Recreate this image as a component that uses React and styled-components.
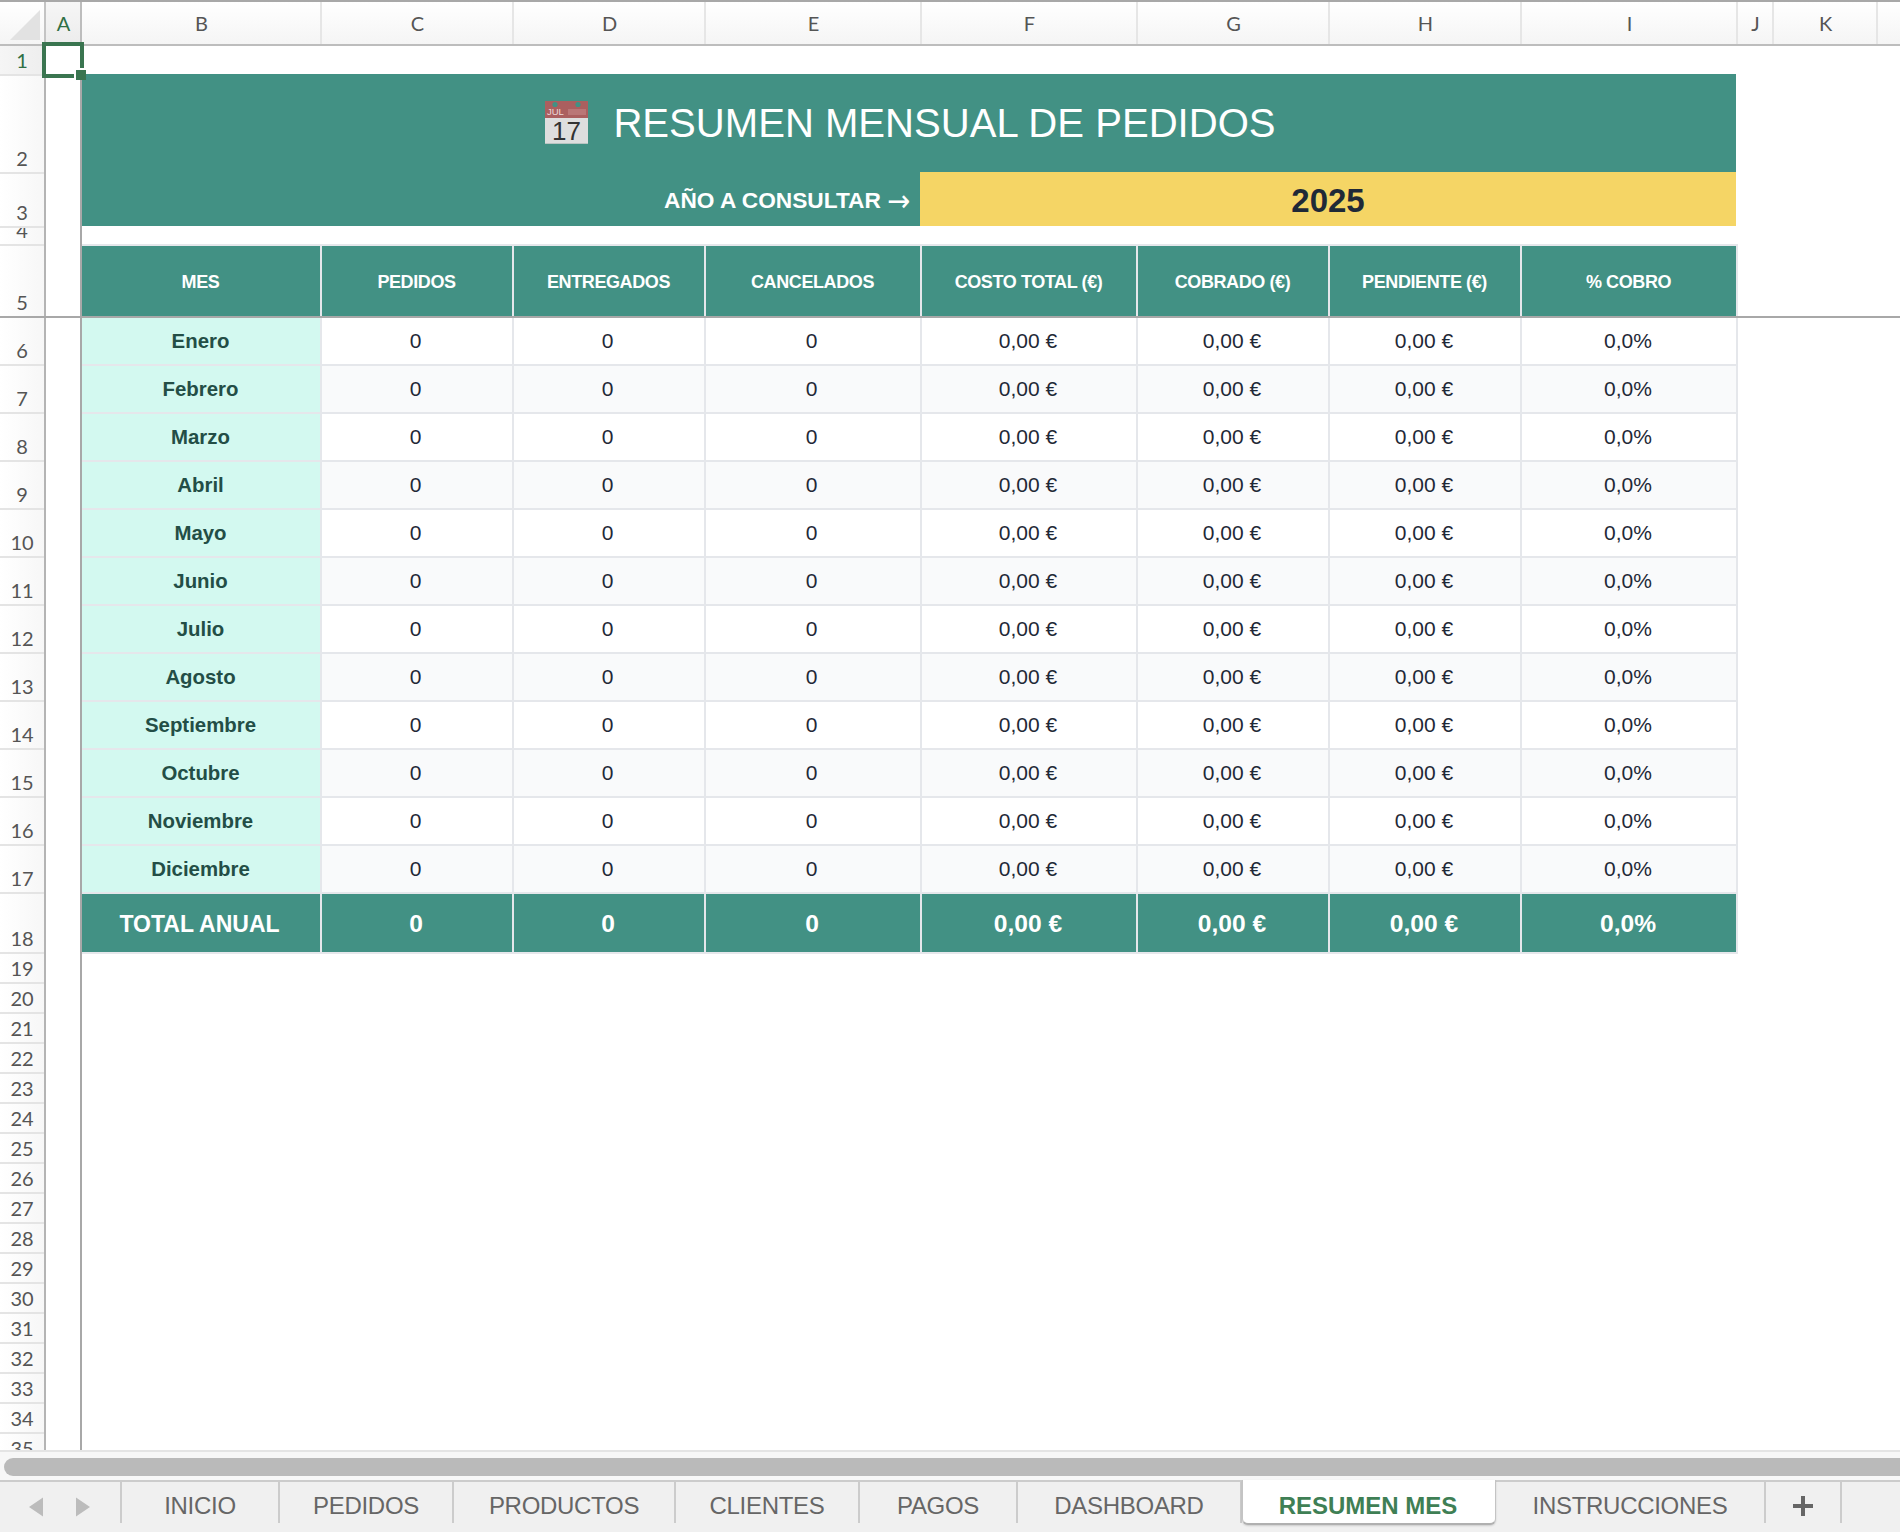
import React from "react";
import styled, { createGlobalStyle } from "styled-components";

const TEAL = "#429184";
const CELL_LINE = "#e5e7eb";
const SHEET_FONT = '"Liberation Sans", Arial, sans-serif';
const HEADER_FONT = 'Lato, "Open Sans", sans-serif';

const GlobalStyle = createGlobalStyle`
  html, body {
    margin: 0;
    padding: 0;
    background: #fff;
  }
  * {
    box-sizing: border-box;
  }
`;

const COLUMNS = [
  { label: "B", width: 240 },
  { label: "C", width: 192 },
  { label: "D", width: 192 },
  { label: "E", width: 216 },
  { label: "F", width: 216 },
  { label: "G", width: 192 },
  { label: "H", width: 192 },
  { label: "I", width: 216 },
  { label: "J", width: 36 },
  { label: "K", width: 104 },
];

const rowHeight = (n) => {
  if (n === 1) return 30;
  if (n === 2) return 98;
  if (n === 3) return 54;
  if (n === 4) return 18;
  if (n === 5) return 72;
  if (n <= 17) return 48;
  if (n === 18) return 60;
  return 30;
};
const ROWS = Array.from({ length: 35 }, (_, i) => i + 1);

const HEADERS = ["MES", "PEDIDOS", "ENTREGADOS", "CANCELADOS", "COSTO TOTAL (€)", "COBRADO (€)", "PENDIENTE (€)", "% COBRO"];
const MONTHS = ["Enero", "Febrero", "Marzo", "Abril", "Mayo", "Junio", "Julio", "Agosto", "Septiembre", "Octubre", "Noviembre", "Diciembre"];

const TABS = [
  { name: "INICIO", width: 158 },
  { name: "PEDIDOS", width: 174 },
  { name: "PRODUCTOS", width: 222 },
  { name: "CLIENTES", width: 184 },
  { name: "PAGOS", width: 158 },
  { name: "DASHBOARD", width: 224 },
  { name: "RESUMEN MES", width: 254, active: true },
  { name: "INSTRUCCIONES", width: 270 },
];

const CalendarIcon = () => (
  <svg width="43" height="43" viewBox="0 0 43 43" overflow="visible">
    <rect width="43" height="43" fill="#b9c4c2" />
    <rect width="43" height="42" fill="#dedede" />
    <rect width="43" height="17" fill="#ab5f5f" />
    <circle cx="10" cy="3.5" r="2.6" fill={TEAL} />
    <circle cx="33" cy="3.5" r="2.6" fill={TEAL} />
    <text x="2" y="14" fontFamily={SHEET_FONT} fontSize="9.5" fill="#ecd9d9">JUL</text>
    <path d="M24 8v6M26 8v6M28 8v6M30 8v6M32 8v6M34 8v6M36 8v6M38 8v6M40 8v6" stroke="#c98e8e" strokeWidth="1" />
    <text x="21.5" y="39" textAnchor="middle" fontFamily={SHEET_FONT} fontSize="26" fill="#333">17</text>
  </svg>
);

export default function App() {
  return (
    <>
      <GlobalStyle />
      <Page>
        <ColumnBar>
          <Corner>
            <svg width="30" height="30" viewBox="0 0 30 30">
              <path d="M30 0V30H0Z" fill="#e2e2e2" />
            </svg>
          </Corner>
          <ColumnLabel $width={36} $selected>A</ColumnLabel>
          {COLUMNS.map((c) => (
            <ColumnLabel key={c.label} $width={c.width}>{c.label}</ColumnLabel>
          ))}
          <ColumnFiller />
        </ColumnBar>

        <Body>
          <RowBar>
            {ROWS.map((n) => (
              <RowLabel key={n} $height={rowHeight(n)} $selected={n === 1}>{n}</RowLabel>
            ))}
          </RowBar>
          <FrozenColumn />
          <Content>
            <Banner>
              <TitleRow>
                <CalendarIcon />
                <Title>RESUMEN MENSUAL DE PEDIDOS</Title>
              </TitleRow>
              <YearRow>
                <YearLabel>
                  AÑO A CONSULTAR <YearArrow>→</YearArrow>
                </YearLabel>
                <YearValue>2025</YearValue>
              </YearRow>
            </Banner>
            <Table>
              {HEADERS.map((h) => (
                <HeadCell key={h}>{h}</HeadCell>
              ))}
              {MONTHS.map((m, i) => (
                <React.Fragment key={m}>
                  <MonthCell>{m}</MonthCell>
                  <DataCell $odd={i % 2 === 1} $count>0</DataCell>
                  <DataCell $odd={i % 2 === 1} $count>0</DataCell>
                  <DataCell $odd={i % 2 === 1} $count>0</DataCell>
                  <DataCell $odd={i % 2 === 1}>0,00 €</DataCell>
                  <DataCell $odd={i % 2 === 1}>0,00 €</DataCell>
                  <DataCell $odd={i % 2 === 1}>0,00 €</DataCell>
                  <DataCell $odd={i % 2 === 1}>0,0%</DataCell>
                </React.Fragment>
              ))}
              <TotalLabel>TOTAL ANUAL</TotalLabel>
              <TotalCell>0</TotalCell>
              <TotalCell>0</TotalCell>
              <TotalCell>0</TotalCell>
              <TotalCell>0,00 €</TotalCell>
              <TotalCell>0,00 €</TotalCell>
              <TotalCell>0,00 €</TotalCell>
              <TotalCell>0,0%</TotalCell>
            </Table>
          </Content>
        </Body>

        <FreezeLine />
        <Selection>
          <Handle />
        </Selection>

        <ScrollTrack>
          <ScrollThumb />
        </ScrollTrack>

        <TabBar>
          <TabNav>
            <svg width="16" height="20" viewBox="0 0 16 20">
              <path d="M15 0.5V19.5L1 10Z" fill="#bcbcbc" />
            </svg>
            <svg width="16" height="20" viewBox="0 0 16 20">
              <path d="M1 0.5V19.5L15 10Z" fill="#bcbcbc" />
            </svg>
          </TabNav>
          {TABS.map((t) =>
            t.active ? (
              <ActiveTab key={t.name} $width={t.width}>{t.name}</ActiveTab>
            ) : (
              <Tab key={t.name} $width={t.width}>{t.name}</Tab>
            )
          )}
          <Tab $width={76}>
            <svg width="20" height="20" viewBox="0 0 20 20">
              <path d="M10 0V20M0 10H20" stroke="#666" strokeWidth="4" />
            </svg>
          </Tab>
        </TabBar>
      </Page>
    </>
  );
}

const Page = styled.div`
  position: relative;
  width: 1900px;
  height: 1532px;
  display: flex;
  flex-direction: column;
  overflow: hidden;
  background: #fff;
`;

const ColumnBar = styled.div`
  display: flex;
  height: 46px;
  flex-shrink: 0;
  border-top: 2px solid #a8a8a8;
  border-bottom: 2px solid #bdbdbd;
  background: linear-gradient(#ffffff, #f5f5f5);
`;

const Corner = styled.div`
  width: 46px;
  flex-shrink: 0;
  padding: 8px 0 0 10px;
  border-right: 2px solid #c4c4c4;
`;

const ColumnLabel = styled.div`
  width: ${(p) => p.$width}px;
  flex-shrink: 0;
  display: flex;
  align-items: center;
  justify-content: center;
  padding-left: 1px;
  font: 20px ${HEADER_FONT};
  color: ${(p) => (p.$selected ? "#2f6f45" : "#555")};
  background: ${(p) => (p.$selected ? "linear-gradient(#f6f6f6, #ececec)" : "transparent")};
  border-right: 2px solid ${(p) => (p.$selected ? "#bdbdbd" : "#e6e6e6")};
`;

const ColumnFiller = styled.div`
  flex: 1;
`;

const Body = styled.div`
  flex: 1;
  min-height: 0;
  display: flex;
  overflow: hidden;
`;

const RowBar = styled.div`
  width: 46px;
  flex-shrink: 0;
  display: flex;
  flex-direction: column;
  border-right: 2px solid #b4b4b4;
`;

const RowLabel = styled.div`
  height: ${(p) => p.$height}px;
  flex-shrink: 0;
  overflow: hidden;
  display: flex;
  align-items: flex-end;
  justify-content: center;
  padding-bottom: 2px;
  font: 20px/24px ${HEADER_FONT};
  color: ${(p) => (p.$selected ? "#2f6f45" : "#555")};
  background: ${(p) =>
    p.$selected
      ? "linear-gradient(90deg, #f5f5f5, #eeeeee)"
      : "linear-gradient(90deg, #ffffff, #f7f7f7)"};
  border-bottom: 2px solid #e4e4e4;
`;

const FrozenColumn = styled.div`
  width: 36px;
  flex-shrink: 0;
  border-right: 2px solid #a8a8a8;
`;

const Content = styled.div`
  flex: 1;
  min-width: 0;
  padding-top: 28px;
  display: flex;
  flex-direction: column;
  align-items: flex-start;
`;

const Banner = styled.div`
  width: 1654px;
  margin-bottom: 18px;
  background: ${TEAL};
`;

const TitleRow = styled.div`
  height: 98px;
  display: flex;
  align-items: center;
  justify-content: center;
  gap: 25px;
  padding-left: 3px;

  svg {
    margin-bottom: 2px;
  }
`;

const Title = styled.h1`
  margin: 0;
  font: 400 40.1px ${SHEET_FONT};
  color: #fff;
`;

const YearRow = styled.div`
  height: 54px;
  display: flex;
`;

const YearLabel = styled.div`
  width: 838px;
  display: flex;
  align-items: center;
  justify-content: flex-end;
  gap: 5px;
  padding: 3px 9px 0 0;
  font: 700 22.7px ${SHEET_FONT};
  color: #fff;
`;

const YearArrow = styled.span`
  font: 400 30px/1 "DejaVu Sans", sans-serif;
  transform: scaleX(0.92);
`;

const YearValue = styled.div`
  flex: 1;
  display: flex;
  align-items: center;
  justify-content: center;
  padding-top: 3px;
  font: 700 33px ${SHEET_FONT};
  color: #1f2937;
  background: #f5d565;
`;

const Table = styled.div`
  display: grid;
  grid-template-columns: 240px 192px 192px 216px 216px 192px 192px 216px;
  grid-template-rows: 74px repeat(12, 48px) 60px;
`;

const Cell = styled.div`
  display: flex;
  align-items: center;
  justify-content: center;
  font-family: ${SHEET_FONT};
  border-right: 2px solid ${CELL_LINE};
  border-bottom: 2px solid ${CELL_LINE};
`;

const HeadCell = styled(Cell)`
  background: ${TEAL};
  color: #fff;
  padding: 2px 1px 0 0;
  font-size: 18px;
  font-weight: 700;
  letter-spacing: -0.4px;
  border-top: 2px solid ${CELL_LINE};
`;

const MonthCell = styled(Cell)`
  background: #d3f9f0;
  color: #234e46;
  padding-right: 1px;
  font-size: 20.4px;
  font-weight: 700;
`;

const DataCell = styled(Cell)`
  background: ${(p) => (p.$odd ? "#f9fafb" : "#fff")};
  color: #1f2937;
  font-size: 21px;
  padding-right: ${(p) => (p.$count ? "3px" : "2px")};
`;

const TotalCell = styled(Cell)`
  background: ${TEAL};
  color: #fff;
  padding: 1px 2px 0 0;
  font-size: 24.6px;
  font-weight: 700;
`;

const TotalLabel = styled(TotalCell)`
  font-size: 23px;
  padding: 3px 3px 0 0;
`;

const FreezeLine = styled.div`
  position: absolute;
  left: 0;
  right: 0;
  top: 316px;
  height: 2px;
  background: #a8a8a8;
`;

const Selection = styled.div`
  position: absolute;
  left: 42px;
  top: 42px;
  width: 42px;
  height: 36px;
  border: 4px solid #3a7550;
`;

const Handle = styled.div`
  position: absolute;
  right: -6px;
  bottom: -6px;
  width: 10px;
  height: 10px;
  background: #3a7550;
  box-shadow: -2px -2px 0 #fff;
`;

const ScrollTrack = styled.div`
  height: 30px;
  flex-shrink: 0;
  padding: 6px 0 4px 4px;
  background: #f7f7f7;
  border-top: 2px solid #e4e4e4;
`;

const ScrollThumb = styled.div`
  height: 100%;
  border-radius: 9px 0 0 9px;
  background: #bababa;
`;

const TabBar = styled.div`
  height: 52px;
  flex-shrink: 0;
  display: flex;
  align-items: flex-start;
  background: #f0f0f0;
  border-top: 2px solid #cccccc;
`;

const TabNav = styled.div`
  width: 122px;
  height: 41px;
  display: flex;
  align-items: center;
  justify-content: center;
  gap: 31px;
  padding: 8px 2px 0 0;
  border-right: 2px solid #cccccc;
`;

const Tab = styled.div`
  width: ${(p) => p.$width}px;
  height: 41px;
  flex-shrink: 0;
  display: flex;
  align-items: center;
  justify-content: center;
  padding-top: 6px;
  font: 24px ${SHEET_FONT};
  letter-spacing: -0.3px;
  color: #666;
  border-right: 2px solid #cccccc;
`;

const ActiveTab = styled(Tab)`
  height: 45px;
  margin-top: -2px;
  padding: 8px 2px 0 0;
  color: #3f7f55;
  font-weight: 700;
  letter-spacing: 0;
  background: #fff;
  border-right: 1px solid #c4c4c4;
  border-left: 1px solid #c4c4c4;
  border-bottom: 2px solid #b0b0b0;
  border-radius: 0 0 6px 6px;
  box-shadow: 0 1px 2px rgba(0, 0, 0, 0.15);
`;
